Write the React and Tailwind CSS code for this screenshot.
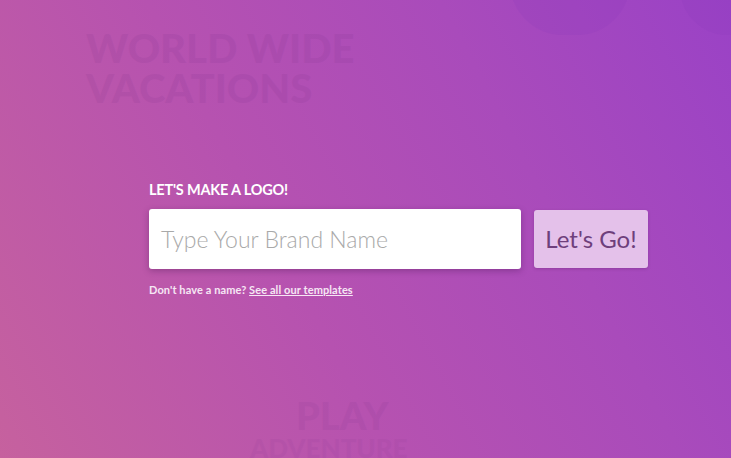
import React from "react";

export default function App() {
  return (
    <div
      className="relative w-full h-[458px] overflow-hidden bg-[linear-gradient(62deg,#c6619e_0%,#b652b0_40%,#a94bbb_70%,#9a42c6_100%)]"
      style={{ fontFamily: "Lato, 'Noto Sans', sans-serif" }}
    >
      {/* faint background decorations */}
      <div className="pointer-events-none absolute left-[86px] top-[28px] text-[40px] font-black leading-[40px] tracking-[0px] text-[#7a2f8a] opacity-[0.12]">
        <div>WORLD WIDE</div>
        <div>VACATIONS</div>
      </div>
      <div className="pointer-events-none absolute left-[510px] top-[-70px] h-[105px] w-[120px] rounded-full bg-[#8a36b8] opacity-[0.16]" />
      <div className="pointer-events-none absolute left-[680px] top-[-60px] h-[95px] w-[110px] rounded-full bg-[#8a36b8] opacity-[0.16]" />
      <div className="pointer-events-none absolute left-[296px] top-[396px] text-[38px] font-black leading-[38px] text-[#7a2f8a] opacity-[0.1]">
        PLAY
      </div>
      <div className="pointer-events-none absolute left-[250px] top-[438px] text-[26px] font-black leading-[20px] text-[#7a2f8a] opacity-[0.08]">
        ADVENTURE
      </div>

      {/* content */}
      <div className="relative flex flex-col pl-[149px] pt-[181px]">
        <div className="text-[14.5px] font-bold leading-[18px] tracking-[-0.2px] text-white">
          LET'S MAKE A LOGO!
        </div>
        <div className="mt-[10px] flex items-center gap-[13px]">
          <div className="flex h-[60px] w-[372px] items-center rounded-[3px] bg-white pl-[12px] shadow-[0_2px_6px_rgba(70,20,80,0.35)]">
            <span className="text-[23px] font-light text-[#a9a9a9]">Type Your Brand Name</span>
          </div>
          <button className="flex h-[58px] w-[114px] items-center justify-center rounded-[3px] bg-[#e4c1ea] text-[24px] text-[#6e3f7c] shadow-[0_1px_3px_rgba(70,20,80,0.25)]">
            Let's Go!
          </button>
        </div>
        <div className="mt-[14px] text-[11px] font-bold leading-[14px] tracking-[0.1px] text-[#f6e6f4]">
          Don't have a name? <span className="underline">See all our templates</span>
        </div>
      </div>
    </div>
  );
}
